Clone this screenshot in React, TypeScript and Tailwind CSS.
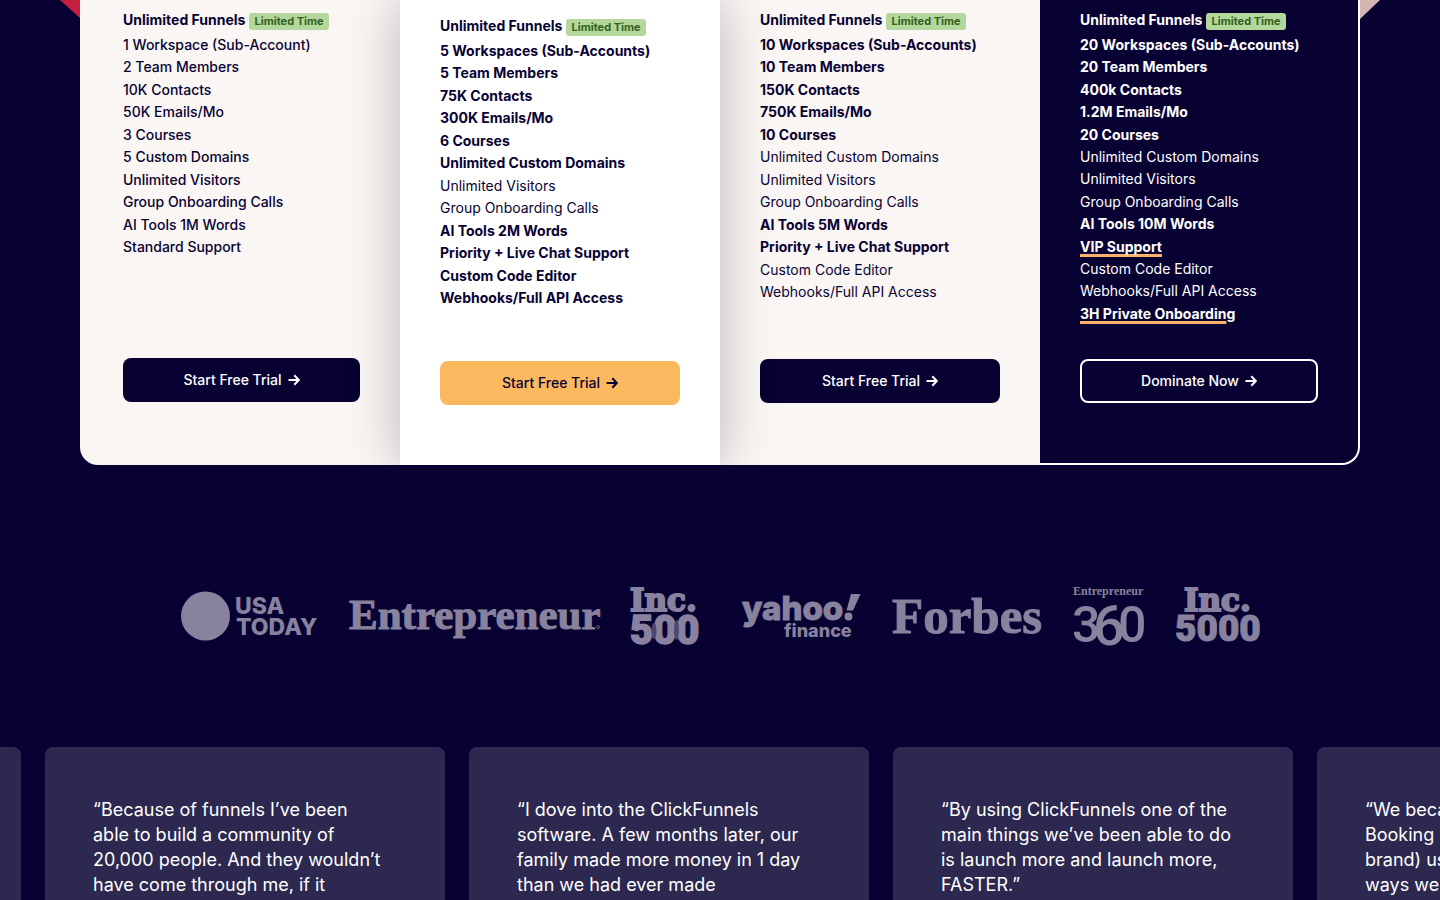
import React from "react";

type Feature = { text: string; bold?: boolean; underline?: boolean; tail?: string };
type Plan = {
  id: string;
  cta: string;
  features: Feature[];
  card: string;
  list: string;
  button: string;
};

const b = (text: string): Feature => ({ text, bold: true });
const n = (text: string): Feature => ({ text });
const u = (text: string, tail = ""): Feature => ({ text, bold: true, underline: true, tail });

const plans: Plan[] = [
  {
    id: "launch",
    cta: "Start Free Trial",
    card: "rounded-bl-[18px] bg-[#faf6f3] pl-[43px] pr-10 pt-[9px] pb-[63px] text-[#080233]",
    list: "min-h-[224px] font-medium",
    button: "bg-[#080233] text-white",
    features: [
      n("1 Workspace (Sub-Account)"), n("2 Team Members"), n("10K Contacts"), n("50K Emails/Mo"),
      n("3 Courses"), n("5 Custom Domains"), n("Unlimited Visitors"), n("Group Onboarding Calls"),
      n("AI Tools 1M Words"), n("Standard Support"),
    ],
  },
  {
    id: "scale",
    cta: "Start Free Trial",
    card: "relative bg-white px-10 pt-[15px] pb-[60px] text-[#080233] shadow-[0_0_50px_rgba(8,2,51,0.27)]",
    list: "min-h-[269px]",
    button: "bg-[#fcb85f] text-[#080233]",
    features: [
      b("5 Workspaces (Sub-Accounts)"), b("5 Team Members"), b("75K Contacts"), b("300K Emails/Mo"),
      b("6 Courses"), b("Unlimited Custom Domains"), n("Unlimited Visitors"), n("Group Onboarding Calls"),
      b("AI Tools 2M Words"), b("Priority + Live Chat Support"), b("Custom Code Editor"), b("Webhooks/Full API Access"),
    ],
  },
  {
    id: "optimize",
    cta: "Start Free Trial",
    card: "bg-[#faf6f3] px-10 pt-[9px] pb-[62px] text-[#080233]",
    list: "min-h-[269px]",
    button: "bg-[#080233] text-white",
    features: [
      b("10 Workspaces (Sub-Accounts)"), b("10 Team Members"), b("150K Contacts"), b("750K Emails/Mo"),
      b("10 Courses"), n("Unlimited Custom Domains"), n("Unlimited Visitors"), n("Group Onboarding Calls"),
      b("AI Tools 5M Words"), b("Priority + Live Chat Support"), n("Custom Code Editor"), n("Webhooks/Full API Access"),
    ],
  },
  {
    id: "dominate",
    cta: "Dominate Now",
    card: "rounded-br-[18px] border-r-2 border-b-2 border-white bg-[#080233] px-10 pt-[9px] pb-[60px] text-white",
    list: "min-h-[291px]",
    button: "border-2 border-white text-white",
    features: [
      b("20 Workspaces (Sub-Accounts)"), b("20 Team Members"), b("400k Contacts"), b("1.2M Emails/Mo"),
      b("20 Courses"), n("Unlimited Custom Domains"), n("Unlimited Visitors"), n("Group Onboarding Calls"),
      b("AI Tools 10M Words"), u("VIP Support"), n("Custom Code Editor"), n("Webhooks/Full API Access"),
      u("3H Private Onboardin", "g"),
    ],
  },
];

function Arrow() {
  return (
    <svg width="12" height="12" viewBox="0 0 12 12" fill="none" stroke="currentColor" strokeWidth="2" aria-hidden="true">
      <path d="M0.5 6H10.5M6.3 1.3L10.8 6L6.3 10.7" />
    </svg>
  );
}

function PlanCard({ plan }: { plan: Plan }) {
  return (
    <article className={`flex flex-col ${plan.card}`}>
      <div className="flex h-[25px] items-start gap-1">
        <h3 className="text-[14px] leading-[22px] font-bold whitespace-nowrap">Unlimited Funnels</h3>
        <span className="mt-1 rounded-[3px] bg-[#b4d89c] px-[5px] text-[11px] leading-[17px] font-bold whitespace-nowrap text-[#33601e]">
          Limited Time
        </span>
      </div>
      <ul className={`flex flex-col justify-between text-[14px] leading-[22px] whitespace-nowrap ${plan.list}`}>
        {plan.features.map((f) => (
          <li key={f.text} className={f.bold ? "font-bold" : undefined}>
            {f.underline ? (
              <>
                <span className="underline decoration-[#fcb26a] decoration-[3px] underline-offset-2 [text-decoration-skip-ink:none]">{f.text}</span>
                {f.tail}
              </>
            ) : (
              f.text
            )}
          </li>
        ))}
      </ul>
      <button
        type="button"
        className={`mt-auto flex h-[44px] w-full items-center justify-center gap-[6px] rounded-[8px] text-[14px] leading-[22px] font-medium ${plan.button}`}
      >
        {plan.cta}
        <Arrow />
      </button>
    </article>
  );
}

const SANS = "Inter, 'Liberation Sans', sans-serif";
const SERIF = "'Liberation Serif', serif";
const SLAB = "'DejaVu Serif', serif";
const BLACK = "Roboto, 'Liberation Sans', sans-serif";
const NARROW = "'Liberation Sans Narrow', Roboto, sans-serif";

function Logos() {
  return (
    <section aria-label="Featured in" className="mx-auto flex max-w-[1080px] items-center justify-between fill-[#88829f] stroke-[#88829f] stroke-0 [&>svg]:overflow-visible">
      <svg width="137" height="64" viewBox="0 0 137 64" role="img" aria-label="USA Today">
        <circle cx="25.500" cy="32" r="24.500" />
        <text x="55" y="30" fontFamily={SANS} fontWeight="800" fontSize="23">USA</text>
        <text x="56" y="51" fontFamily={SANS} fontWeight="800" fontSize="23">TODAY</text>
      </svg>
      <svg width="250" height="64" viewBox="0 0 250 64" role="img" aria-label="Entrepreneur">
        <text x="0" y="45" fontFamily={SERIF} fontWeight="700" fontSize="43" strokeWidth="1">Entrepreneur</text>
        <circle cx="249" cy="43" r="1.500" fill="none" strokeWidth="0.700" />
      </svg>
      <svg width="79" height="64" viewBox="0 0 79 64" role="img" aria-label="Inc. 500">
        <text x="0" y="27" fontFamily={SLAB} fontWeight="700" fontSize="31" strokeWidth="2">Inc.</text>
        <text x="0" y="60" fontFamily={BLACK} fontWeight="900" fontSize="40" strokeWidth="1.500">500</text>
        <ellipse cx="24" cy="47" rx="2.500" ry="8" fill="#4b4672" />
        <ellipse cx="46.500" cy="46" rx="2.500" ry="10" fill="#4b4672" />
      </svg>
      <svg width="119" height="64" viewBox="0 0 119 64" role="img" aria-label="Yahoo Finance">
        <text x="1" y="36" fontFamily={SANS} fontWeight="800" fontSize="33" strokeWidth="1">yahoo</text>
        <path d="M110 10H119.500L112 26.500H105.500ZM107.500 28.500a4 4 0 1 1 0 8a4 4 0 1 1 0-8" />
        <text x="43" y="53" fontFamily={SANS} fontWeight="800" fontSize="18">finance</text>
      </svg>
      <svg width="150" height="64" viewBox="0 0 150 64" role="img" aria-label="Forbes">
        <text x="0" y="49" fontFamily={SERIF} fontWeight="700" fontSize="51" strokeWidth="1">Forbes</text>
      </svg>
      <svg width="70" height="64" viewBox="0 0 70 64" role="img" aria-label="Entrepreneur 360">
        <text x="0" y="11" fontFamily={SERIF} fontWeight="700" fontSize="12">Entrepreneur</text>
        <text x="-1" y="58" fontFamily={NARROW} fontWeight="500" fontSize="50">3</text>
        <text x="20" y="61" fontFamily={NARROW} fontWeight="500" fontSize="56">6</text>
        <text x="45" y="58" fontFamily={NARROW} fontWeight="500" fontSize="50">0</text>
      </svg>
      <svg width="85" height="64" viewBox="0 0 85 64" role="img" aria-label="Inc. 5000">
        <text x="9" y="27" fontFamily={SLAB} fontWeight="700" fontSize="31" strokeWidth="2">Inc.</text>
        <text x="0" y="57" fontFamily={BLACK} fontWeight="900" fontSize="37" strokeWidth="1">5000</text>
      </svg>
    </section>
  );
}

const quotes: string[][] = [
  [],
  ["“Because of funnels I’ve been", "able to build a community of", "20,000 people. And they wouldn’t", "have come through me, if it"],
  ["“I dove into the ClickFunnels", "software. A few months later, our", "family made more money in 1 day", "than we had ever made"],
  ["“By using ClickFunnels one of the", "main things we’ve been able to do", "is launch more and launch more,", "FASTER.”"],
  ["“We became", "Booking", "brand) using", "ways we"],
];

export default function App() {
  return (
    <div className="h-screen overflow-hidden bg-[#080233] font-['Inter','Liberation_Sans',sans-serif]">
      <main>
        <div className="relative px-20">
          <svg className="absolute top-0 left-[60px]" width="20" height="18" aria-hidden="true">
            <path d="M0 0H20V18Z" fill="#c51f42" />
          </svg>
          <svg className="absolute top-0 right-[60px]" width="20" height="20" aria-hidden="true">
            <path d="M0 0H20L0 19Z" fill="#d6b4b0" />
          </svg>
          <section aria-label="Plans" className="grid min-h-[465px] grid-cols-4 overflow-hidden">
            {plans.map((p) => (
              <PlanCard key={p.id} plan={p} />
            ))}
          </section>
        </div>
        <div className="px-20 pt-[119px] pb-[99px]">
          <Logos />
        </div>
        <section aria-label="Testimonials" className="-ml-[379px] flex gap-6">
          {quotes.map((lines, i) => (
            <blockquote key={i} className="min-h-[320px] w-[400px] shrink-0 rounded-[8px] bg-[#2d2850] p-12 pt-[50px] text-[18px] leading-[25px] whitespace-nowrap text-white">
              {lines.map((line) => (
                <span key={line} className="block">{line}</span>
              ))}
            </blockquote>
          ))}
        </section>
      </main>
    </div>
  );
}
